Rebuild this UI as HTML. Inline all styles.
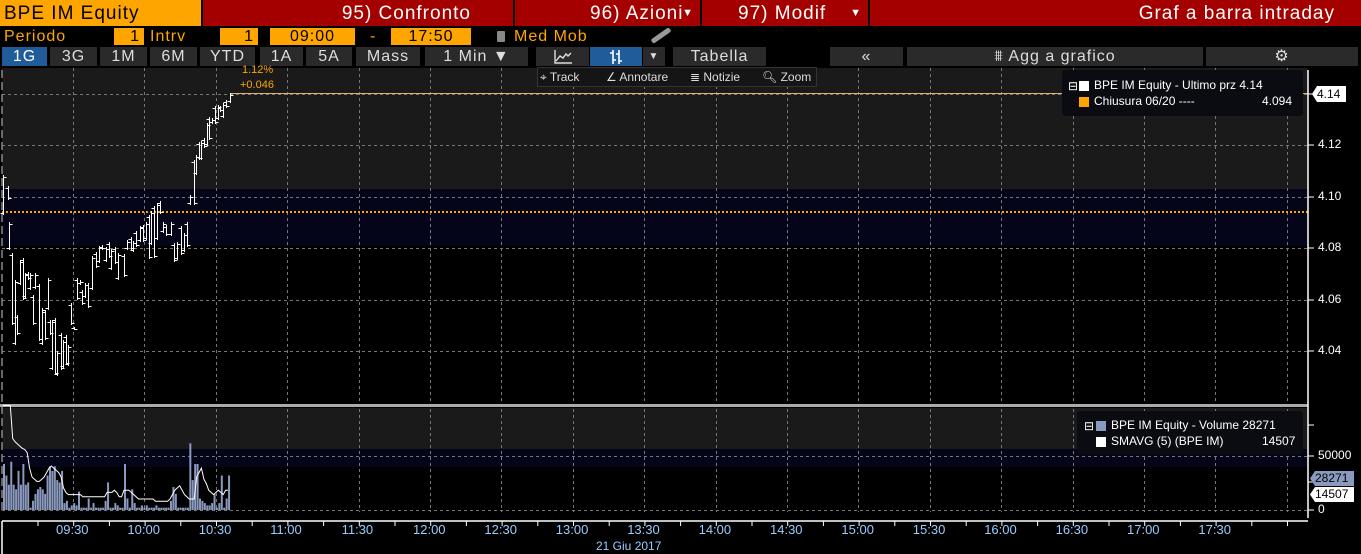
<!DOCTYPE html>
<html><head><meta charset="utf-8"><style>
*{margin:0;padding:0;box-sizing:border-box}
body{width:1361px;height:554px;background:#000;overflow:hidden;font-family:"Liberation Sans",sans-serif;position:relative;color:#fff}
.a{position:absolute;white-space:nowrap}
.top{font-size:19px;top:0;height:26px;line-height:27px;letter-spacing:1px}
.red{background:#a40000;color:#fff}
.or{background:#ffa500;color:#000}
.r2{top:28px;height:17px;font-size:16px;line-height:18px;letter-spacing:1px}
.b{top:47px;height:19px;background:#2a2a2a;color:#ddd;font-size:16px;line-height:19px;text-align:center;letter-spacing:1px}
.tb{top:67px;height:20px;font-size:12px;line-height:20px;color:#ddd;background:#151515}
.ax{font-size:12px;color:#fff}
.tl{font-size:13px;color:#9cf;top:522px}
</style></head><body>
<div class="a top or" style="left:0;width:201px;padding-left:4px">BPE IM Equity</div>
<div class="a top red" style="left:203px;width:310px;text-align:right;padding-right:42px">95) Confronto</div>
<div class="a top red" style="left:515px;width:185px;padding-left:75px">96) Azioni <span style="font-size:11px;position:absolute;right:6px">▼</span></div>
<div class="a top red" style="left:702px;width:166px;padding-left:36px">97) Modif <span style="font-size:11px;position:absolute;right:6px">▼</span></div>
<div class="a top red" style="left:870px;width:491px;text-align:right;padding-right:26px">Graf a barra intraday</div>

<div class="a r2" style="left:4px;color:#ffa500">Periodo</div>
<div class="a r2 or" style="left:114px;width:30px;text-align:right;padding-right:4px">1</div>
<div class="a r2" style="left:150px;color:#ffa500">Intrv</div>
<div class="a r2 or" style="left:220px;width:38px;text-align:right;padding-right:4px">1</div>
<div class="a r2 or" style="left:270px;width:85px;text-align:center">09:00</div>
<div class="a r2" style="left:370px;color:#ffa500">-</div>
<div class="a r2 or" style="left:391px;width:80px;text-align:center">17:50</div>
<div class="a" style="left:497px;top:31px;width:8px;height:11px;background:#888;border-radius:1px"></div>
<div class="a r2" style="left:514px;color:#ffa500">Med Mob</div>
<div class="a" style="left:650px;top:33px;width:22px;height:5px;background:#999;transform:rotate(-35deg);border-radius:2px"></div>

<div class="a b" style="left:2px;width:45px;background:#1f5c99;color:#fff">1G</div>
<div class="a b" style="left:50px;width:47px">3G</div>
<div class="a b" style="left:100px;width:47px">1M</div>
<div class="a b" style="left:150px;width:47px">6M</div>
<div class="a b" style="left:200px;width:55px">YTD</div>
<div class="a b" style="left:260px;width:43px">1A</div>
<div class="a b" style="left:306px;width:46px">5A</div>
<div class="a b" style="left:356px;width:64px">Mass</div>
<div class="a b" style="left:425px;width:103px">1 Min ▼</div>
<div class="a b" style="left:536px;width:53px"><svg width="22" height="16" viewBox="0 0 22 16" style="margin-top:2px"><path d="M3 1V14H20M4 12L8 7L11 9L14 5L16 7L19 4" stroke="#ddd" fill="none" stroke-width="1.4"/></svg></div>
<div class="a b" style="left:590px;width:52px;background:#1f5c99;color:#fff"><svg width="20" height="16" viewBox="0 0 20 16" style="margin-top:2px"><path d="M7 1V15M13 1V15M4 4H7M7 11H10M10 5H13M13 12H16" stroke="#fff" fill="none" stroke-width="1.6"/></svg></div>
<div class="a b" style="left:643px;width:22px;font-size:10px">▼</div>
<div class="a b" style="left:673px;width:93px">Tabella</div>
<div class="a b" style="left:830px;width:73px">«</div>
<div class="a b" style="left:907px;width:296px">⩩ Agg a grafico</div>
<div class="a b" style="left:1206px;width:152px">⚙</div>

<svg class="a" style="left:0;top:66px" width="1361" height="488" id="ch"></svg>

<div class="a tb" style="left:537px;width:280px;border:1px solid #333"></div>
<div class="a tb" style="left:540px;background:none">⌖ Track</div>
<div class="a tb" style="left:606px;background:none">∠ Annotare</div>
<div class="a tb" style="left:690px;background:none">≣ Notizie</div>
<div class="a tb" style="left:762px;background:none">🔍︎ Zoom</div>

<div class="a" style="left:242px;top:64px;font-size:11px;color:#ffa500">1.12%</div>
<div class="a" style="left:240px;top:79px;font-size:11px;color:#ffa500">+0.046</div>

<div class="a" style="left:1062px;top:70px;width:241px;height:46px;background:#0b0b12;border-radius:3px"></div>
<div class="a ax" style="left:1068px;top:79px;font-size:12px">⊟</div>
<div class="a" style="left:1079px;top:81px;width:10px;height:10px;background:#fff"></div>
<div class="a ax" style="left:1094px;top:78px">BPE IM Equity - Ultimo prz 4.14</div>
<div class="a" style="left:1079px;top:97px;width:10px;height:10px;background:#ffa500"></div>
<div class="a ax" style="left:1094px;top:94px">Chiusura 06/20 ----</div>
<div class="a ax" style="left:1262px;top:94px">4.094</div>

<div class="a" style="left:1077px;top:411px;width:226px;height:43px;background:#0b0b12;border-radius:3px"></div>
<div class="a ax" style="left:1084px;top:419px">⊟</div>
<div class="a" style="left:1096px;top:421px;width:10px;height:10px;background:#8a9abf"></div>
<div class="a ax" style="left:1111px;top:418px">BPE IM Equity - Volume 28271</div>
<div class="a" style="left:1096px;top:437px;width:10px;height:10px;background:#fff"></div>
<div class="a ax" style="left:1111px;top:434px">SMAVG (5) (BPE IM)</div>
<div class="a ax" style="left:1262px;top:434px">14507</div>

<div class="a ax" style="left:1318px;top:137px">4.12</div>
<div class="a ax" style="left:1318px;top:189px">4.10</div>
<div class="a ax" style="left:1318px;top:240px">4.08</div>
<div class="a ax" style="left:1318px;top:292px">4.06</div>
<div class="a ax" style="left:1318px;top:343px">4.04</div>
<div class="a ax" style="left:1318px;top:448px">50000</div>
<div class="a ax" style="left:1318px;top:502px">0</div>
<div class="a" style="left:1312px;top:86px;width:34px;height:16px;background:#fff;color:#000;font-size:12px;line-height:16px;padding-left:5px;clip-path:polygon(5px 0,100% 0,100% 100%,5px 100%,0 50%)">4.14</div>
<div class="a" style="left:1310px;top:471px;width:44px;height:15px;background:#8a9abf;color:#000;font-size:12px;line-height:15px;padding-left:5px;clip-path:polygon(5px 0,100% 0,100% 100%,5px 100%,0 50%)">28271</div>
<div class="a" style="left:1310px;top:487px;width:44px;height:15px;background:#fff;color:#000;font-size:12px;line-height:15px;padding-left:5px;clip-path:polygon(5px 0,100% 0,100% 100%,5px 100%,0 50%)">14507</div>

<div id="tl"></div>
<div class="a" style="left:596px;top:539px;font-size:12px;color:#9cf">21 Giu 2017</div>

<script>
var s=document.getElementById('ch'),h='';
function R(x,y,w,hh,c){h+='<rect x="'+x+'" y="'+(y-66)+'" width="'+w+'" height="'+hh+'" fill="'+c+'"/>';}
function L(x1,y1,x2,y2,c,w,d){h+='<line x1="'+x1+'" y1="'+(y1-66)+'" x2="'+x2+'" y2="'+(y2-66)+'" stroke="'+c+'" stroke-width="'+(w||1)+'"'+(d?' stroke-dasharray="'+d+'"':'')+'/>';}
R(2,68,1306,121,'#1a1a1a');R(2,189,1306,57,'#05051a');
R(2,408,1306,41,'#1a1a1a');R(2,449,1306,18,'#05051a');
var xs=[];for(var i=0;i<18;i++)xs.push(73.5+Math.round(i*71.4));
xs.forEach(function(x){L(x,68,x,403,'#777',1,'3,3');L(x,409,x,512,'#777',1,'3,3');});
[94.5,145.5,197.5,248.5,300.5,351.5].forEach(function(y){L(2,y,1308,y,'#777',1,'3,3');});
L(2,456.5,1308,456.5,'#777',1,'3,3');L(2,510.5,1308,510.5,'#777',1,'3,3');
L(2,70,2,512,'#888',1.5,'8,4');
L(2,212,1308,212,'#ffa500',2,'2,2');
L(230,93.5,1308,93.5,'#e8b070',1);
R(0,404,1308,3,'#aaa');
L(1308,70,1308,518,'#fff',1.5);
L(2,521,1308,521,'#fff',1.5);L(2,521,2,554,'#fff',1.5);
[94,145,197,248,300,351,456,510,425,482].forEach(function(y){L(1308,y,1314,y,'#fff',1);});
for(var i=0;i<36;i++){var x=38+i*35.7;L(x,521,x,526,'#fff',1);}
var b=[[3,175,215],[8,186,200],[9,222,250],[12,253,325],[15,280,345],[17,315,335],[20,260,285],[23,258,300],[25,273,298],[28,272,280],[30,273,290],[33,295,325],[35,273,289],[39,284,341],[42,308,345],[45,310,340],[48,278,310],[50,320,335],[52,320,370],[55,318,375],[57,351,376],[61,333,370],[63,340,368],[66,335,365],[68,345,366],[71,303,325],[74,327,330],[77,278,300],[80,280,285],[82,290,305],[85,283,298],[88,283,308],[92,256,290],[96,252,268],[99,246,263],[102,245,250],[106,247,262],[109,242,258],[111,249,270],[115,247,264],[118,253,280],[124,254,277],[127,240,250],[131,237,250],[133,241,252],[136,231,247],[140,226,242],[143,225,242],[146,222,240],[149,215,259],[151,211,245],[154,206,258],[157,203,240],[160,201,214],[163,222,233],[166,225,236],[171,222,236],[174,243,262],[177,242,260],[181,226,255],[184,233,252],[187,222,247],[190,195,205],[194,160,205],[196,155,175],[199,142,160],[201,141,160],[204,138,148],[207,123,146],[209,117,140],[212,118,124],[215,106,124],[218,105,120],[220,106,112],[223,103,118],[226,100,108],[230,93,103]];
b.forEach(function(a,i){var x=a[0]+.5,o=(i%2?a[1]+2:a[2]-2)+.5,c=(i%2?a[2]-2:a[1]+2)+.5;L(x,a[1],x,a[2],'#fff',1);L(x-3,o,x,o,'#fff',1);L(x,c,x+3,c,'#fff',1);});
var v=[40,30,22,42,22,18,34,22,40,22,24,2,8,14,18,20,18,14,30,38,34,38,26,24,34,6,8,2,4,6,4,16,2,2,2,10,2,6,2,2,2,2,8,24,2,2,6,4,2,2,40,10,2,18,6,2,2,4,2,4,2,2,2,4,2,2,2,2,2,8,20,14,2,2,2,2,2,58,26,40,40,10,8,6,4,4,6,14,2,6,30,2,10,30];
var pts=[];
v.forEach(function(hh,i){var x=3+i*2.42;hh=hh*1.15;R(x,510-hh,2,hh,'#8a9abf');});
var sm=[95,95,95,95,65,62,60,58,56,55,52,38,30,28,26,26,28,30,34,38,40,38,36,34,30,20,16,14,14,14,14,14,14,12,12,12,12,12,12,12,12,12,12,16,16,16,18,16,12,12,18,18,18,16,14,12,10,10,10,10,10,10,10,8,8,8,8,8,8,10,14,18,20,22,18,14,12,10,10,10,30,34,38,28,24,18,16,14,16,18,16,14,18,18];
sm.forEach(function(y,i){pts.push((3+i*2.42).toFixed(1)+','+(510-y*1.1-66).toFixed(1));});
h+='<polyline points="'+pts.join(' ')+'" fill="none" stroke="#fff" stroke-width="1"/>';
s.innerHTML=h;
var t=['09:30','10:00','10:30','11:00','11:30','12:00','12:30','13:00','13:30','14:00','14:30','15:00','15:30','16:00','16:30','17:00','17:30'],tl='';
t.forEach(function(x,i){tl+='<div class="a tl" style="left:'+(56+i*71.4)+'px">'+x+'</div>';});
document.getElementById('tl').innerHTML=tl;
</script>
</body></html>
